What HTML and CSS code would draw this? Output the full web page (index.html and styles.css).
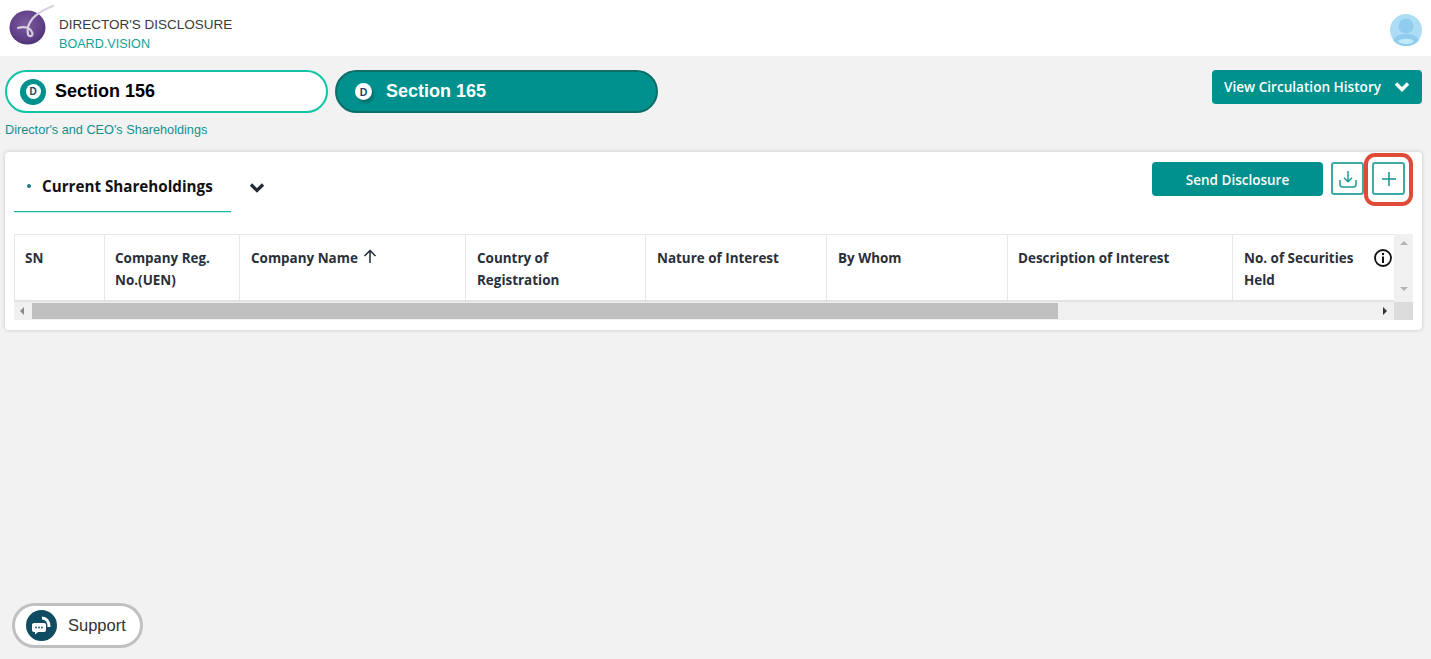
FILE: index.html
```html
<!DOCTYPE html>
<html lang="en">
<head>
  <meta charset="UTF-8" />
  <title>Director's Disclosure – Board.Vision</title>
  <link rel="stylesheet" href="styles.css">
</head>
<body>
  <header class="topbar">
    <div class="brand">
      <svg class="logo" width="48" height="46" viewBox="0 0 48 46">
        <defs>
          <radialGradient id="orb" cx="45%" cy="40%" r="65%">
            <stop offset="0" stop-color="#7d5a9c" />
            <stop offset="0.7" stop-color="#5f3f86" />
            <stop offset="1" stop-color="#4a2f70" />
          </radialGradient>
        </defs>
        <ellipse cx="18.500" cy="24.500" rx="18" ry="17" fill="url(#orb)" />
        <path d="M44 3C36 6 22 13 19 24C18 30 19 34 22 33C25 32 23 27 19 25C16 24 12 24 9 25" fill="none" stroke="#d9d0e2" stroke-width="2.200" stroke-linecap="round" />
      </svg>
      <div class="brand-text">
        <div class="brand-title">DIRECTOR'S DISCLOSURE</div>
        <div class="brand-sub">BOARD.VISION</div>
      </div>
    </div>
    <svg class="avatar" width="32" height="32" viewBox="0 0 32 32">
      <circle cx="16" cy="16" r="16" fill="#a9dcf4" />
      <circle cx="16" cy="12" r="7.500" fill="#8cc9ee" />
      <path d="M3 26C6 21 11 20 16 20C21 20 26 21 29 26C26 30 21 32 16 32C11 32 6 30 3 26Z" fill="#8cc9ee" />
      <path d="M8 27C11 24 21 24 24 27C22 31 10 31 8 27Z" fill="#bdeafa" />
    </svg>
  </header>

  <main class="content">
    <div class="section-row">
      <div>
        <div class="tabs">
          <div class="tab tab-light">
            <span class="badge-ring"><span>D</span></span>
            Section 156
          </div>
          <div class="tab tab-dark">
            <span class="badge-dot">D</span>
            Section 165
          </div>
        </div>
        <div class="crumb">Director's and CEO's Shareholdings</div>
      </div>
      <button class="btn btn-history">
        View Circulation History
        <svg width="16" height="11" viewBox="0 0 16 11"><path d="M2 2.500L8 8.500L14 2.500" fill="none" stroke="#fff" stroke-width="3.400" /></svg>
      </button>
    </div>

    <section class="card">
      <div class="card-head">
        <div class="card-title-wrap">
          <div class="card-title"><span class="dot"></span>Current Shareholdings</div>
          <svg class="title-chevron" width="16" height="11" viewBox="0 0 16 11"><path d="M2 2.500L8 8.500L14 2.500" fill="none" stroke="#212b36" stroke-width="3.200" /></svg>
        </div>
        <div class="actions">
          <button class="btn btn-send">Send Disclosure</button>
          <button class="icon-btn">
            <svg width="20" height="20" viewBox="0 0 20 20" fill="none" stroke="#1f9a94" stroke-width="1.500">
              <path d="M10 2V12.500M6 8.800L10 12.800L14 8.800" />
              <path d="M2 11V15.500C2 17 3 18 4.500 18H15.500C17 18 18 17 18 15.500V11" />
            </svg>
          </button>
          <button class="icon-btn icon-btn-add">
            <svg width="16" height="16" viewBox="0 0 16 16"><path d="M8 1V15M1 8H15" stroke="#0f928c" stroke-width="1.500" /></svg>
            <span class="highlight"></span>
          </button>
        </div>
      </div>

      <div class="grid-wrap">
        <div class="grid-main">
          <div class="grid-head">
            <div class="col col-sn">SN</div>
            <div class="col col-reg">Company Reg. No.(UEN)</div>
            <div class="col col-name">Company Name
              <svg class="sort" width="14" height="14" viewBox="0 0 14 14"><path d="M7 14V1.500M1.500 7L7 1.500L12.500 7" fill="none" stroke="#212b36" stroke-width="1.500" /></svg>
            </div>
            <div class="col col-country">Country of Registration</div>
            <div class="col col-nature">Nature of Interest</div>
            <div class="col col-whom">By Whom</div>
            <div class="col col-desc">Description of Interest</div>
            <div class="col col-sec">
              <span class="sec-label">No. of Securities Held</span>
              <svg class="info" width="18" height="18" viewBox="0 0 18 18">
                <circle cx="9" cy="9" r="8" fill="none" stroke="#111" stroke-width="1.800" />
                <path d="M9 7.500V14" stroke="#111" stroke-width="2" />
                <circle cx="9" cy="5" r="1.200" fill="#111" />
              </svg>
            </div>
          </div>
          <div class="vbar">
            <span class="arrow-up"></span>
            <span class="arrow-down"></span>
          </div>
        </div>
        <div class="hbar">
          <span class="arrow-left"></span>
          <div class="hbar-track"><div class="hbar-thumb"></div></div>
          <span class="arrow-right"></span>
          <div class="hbar-corner"></div>
        </div>
      </div>
    </section>
  </main>

  <div class="support">
    <span class="support-icon">
      <svg width="22" height="20" viewBox="0 0 22 20">
        <path d="M3 7H13C14.500 7 15 8 15 9V14C15 15.500 14 16 13 16H7L4 18.500V16H3C1.800 16 1 15 1 14V9C1 8 1.800 7 3 7Z" fill="#fff" />
        <circle cx="5" cy="11.500" r="0.900" fill="#0f4c61" />
        <circle cx="8" cy="11.500" r="0.900" fill="#0f4c61" />
        <circle cx="11" cy="11.500" r="0.900" fill="#0f4c61" />
        <path d="M11 2C15 2 18 5 18 11" fill="none" stroke="#fff" stroke-width="3" />
      </svg>
    </span>
    Support
  </div>
</body>
</html>
```

FILE: styles.css
```css
* { box-sizing: border-box; margin: 0; padding: 0; }
html, body { height: 100%; background: #f2f2f2; font-family: "Open Sans", "Noto Sans", sans-serif; overflow: hidden; }

.topbar {
  display: flex; justify-content: space-between; align-items: center;
  height: 56px; background: #fff; padding: 0 9px;
}
.brand { display: flex; align-items: center; }
.logo { display: block; margin-top: -4px; }
.brand-text { margin-left: 2px; margin-top: 12px; font-family: "Liberation Sans", Arial, sans-serif; }
.brand-title { font-size: 13.500px; line-height: 19px; color: #3a3a3a; }
.brand-sub { font-size: 12.600px; line-height: 17px; margin-top: 2px; color: #14a09a; }
.avatar { display: block; margin-top: 3px; opacity: 0.95; }

.content { padding: 14px 9px 0 5px; }
.section-row { display: flex; justify-content: space-between; align-items: flex-start; }
.tabs { display: flex; gap: 7px; }
.tab {
  display: flex; align-items: center; width: 323px; height: 43px; border-radius: 22px;
  font-family: "Liberation Sans", Arial, sans-serif; font-size: 18px; font-weight: bold;
}
.tab-light { background: #fff; border: 2px solid #10c4a4; color: #000; padding-left: 13px; }
.tab-dark { background: #00918e; border: 2px solid #0f6e68; color: #fff; padding-left: 18px; }
.badge-ring {
  display: flex; align-items: center; justify-content: center;
  width: 26px; height: 26px; border-radius: 50%; background: #00918e; margin-right: 9px;
}
.badge-ring span {
  display: flex; align-items: center; justify-content: center;
  width: 15px; height: 15px; border-radius: 50%; background: #fff; color: #20475a; font-size: 10px;
}
.badge-dot {
  display: flex; align-items: center; justify-content: center;
  width: 17px; height: 17px; border-radius: 50%; background: #fff; color: #20475a; font-size: 10.500px;
  margin-right: 14px; box-shadow: 2px 3px 3px rgba(0,0,0,0.25);
}
.crumb {
  margin-top: 10px; font-family: "Liberation Sans", Arial, sans-serif;
  font-size: 12.700px; line-height: 15px; color: #14908c;
}

.btn {
  display: flex; align-items: center; justify-content: center;
  background: #00918e; color: #fff; border: none; border-radius: 4px;
  font-family: "Open Sans", "Noto Sans", sans-serif; font-weight: 600; cursor: pointer;
}
.btn-history { width: 210px; height: 34px; gap: 13px; font-size: 13.600px; padding-bottom: 1px; }

.card {
  margin-top: 14px; height: 178px; background: #fff; border-radius: 4px;
  box-shadow: 0 0 4px rgba(0,0,0,0.18); padding: 0 9px;
}
.card-head { display: flex; justify-content: space-between; height: 82px; }
.card-title-wrap { display: flex; align-items: flex-start; }
.card-title {
  display: flex; align-items: center; width: 217px; height: 60px; padding: 9px 0 0 13px;
  border-bottom: 1px solid #12b8a0; box-shadow: 0 1px 0 #c4eee7; font-size: 15.200px; font-weight: 700; color: #111;
}
.dot { width: 4px; height: 4px; border-radius: 50%; background: #1c7a80; margin-right: 11px; }
.title-chevron { margin: 30px 0 0 18px; }

.actions { display: flex; align-items: flex-start; margin-top: 10px; padding-right: 8px; }
.btn-send { width: 171px; height: 34px; font-size: 13.500px; margin-right: 8px; padding-top: 1px; }
.icon-btn {
  position: relative; display: flex; align-items: center; justify-content: center;
  width: 33px; height: 33px; background: #fff; border: 2px solid #3eaaa6; border-radius: 3px;
}
.icon-btn-add { margin-left: 8px; }
.highlight {
  position: absolute; left: -10px; top: -11px; width: 49px; height: 53px;
  border: 4px solid #e04b38; border-radius: 11px;
}

.grid-wrap { width: 1399px; }
.grid-main { display: flex; height: 68px; }
.grid-head {
  display: flex; width: 1380px; border-top: 1px solid #e6e8ea; border-left: 1px solid #e6e8ea;
  border-bottom: 2px solid #dfe3e6; overflow: hidden;
}
.col {
  flex: none; padding: 12px 10px 0 11px; border-right: 1px solid #e6e8ea;
  font-size: 13.450px; line-height: 22px; font-weight: 700; color: #2a2f3a;
}
.col-sn { width: 90px; padding-left: 10px; }
.col-reg { width: 135px; padding-left: 10px; }
.col-name { width: 226px; display: flex; align-items: flex-start; }
.col-name .sort { margin: 2px 0 0 5px; }
.col-country { width: 180px; padding-right: 30px; }
.col-nature { width: 181px; }
.col-whom { width: 181px; }
.col-desc { width: 225px; padding-left: 10px; }
.col-sec { width: 162px; display: flex; padding-right: 0; border-right: none; }
.sec-label { display: block; width: 118px; flex: none; }
.info { flex: none; margin: 2px 0 0 12px; }

.vbar { position: relative; width: 19px; background: #f0f0f0; }
.arrow-up, .arrow-down, .arrow-left, .arrow-right { width: 0; height: 0; border-style: solid; display: block; }
.arrow-up { margin: 7px auto 0; border-width: 0 4px 4px; border-color: transparent transparent #b4b4b4; }
.arrow-down { margin: 42px auto 0; border-width: 4px 4px 0; border-color: #b4b4b4 transparent transparent; }

.hbar { display: flex; align-items: center; height: 18px; background: #f0f0f0; }
.arrow-left { margin: 0 8px 0 6px; border-width: 4px 4px 4px 0; border-color: transparent #8a8a8a transparent transparent; }
.hbar-track { flex: 1; height: 16px; }
.hbar-thumb { width: 1026px; height: 16px; background: #c0c0c0; }
.arrow-right { margin: 0 7px 0 6px; border-width: 4px 0 4px 4px; border-color: transparent transparent transparent #333; }
.hbar-corner { width: 19px; height: 18px; background: #dcdcdc; }

.support {
  position: fixed; left: 12px; bottom: 11px; display: flex; align-items: center;
  width: 131px; height: 45px; border: 3px solid #c0c0c0; border-radius: 23px; background: #fff;
  padding-left: 11px; font-family: "Liberation Sans", Arial, sans-serif; font-size: 16.500px; color: #333;
}
.support-icon {
  display: flex; align-items: center; justify-content: center;
  width: 31px; height: 31px; border-radius: 50%; background: #0f4c61; margin-right: 11px;
}
```
